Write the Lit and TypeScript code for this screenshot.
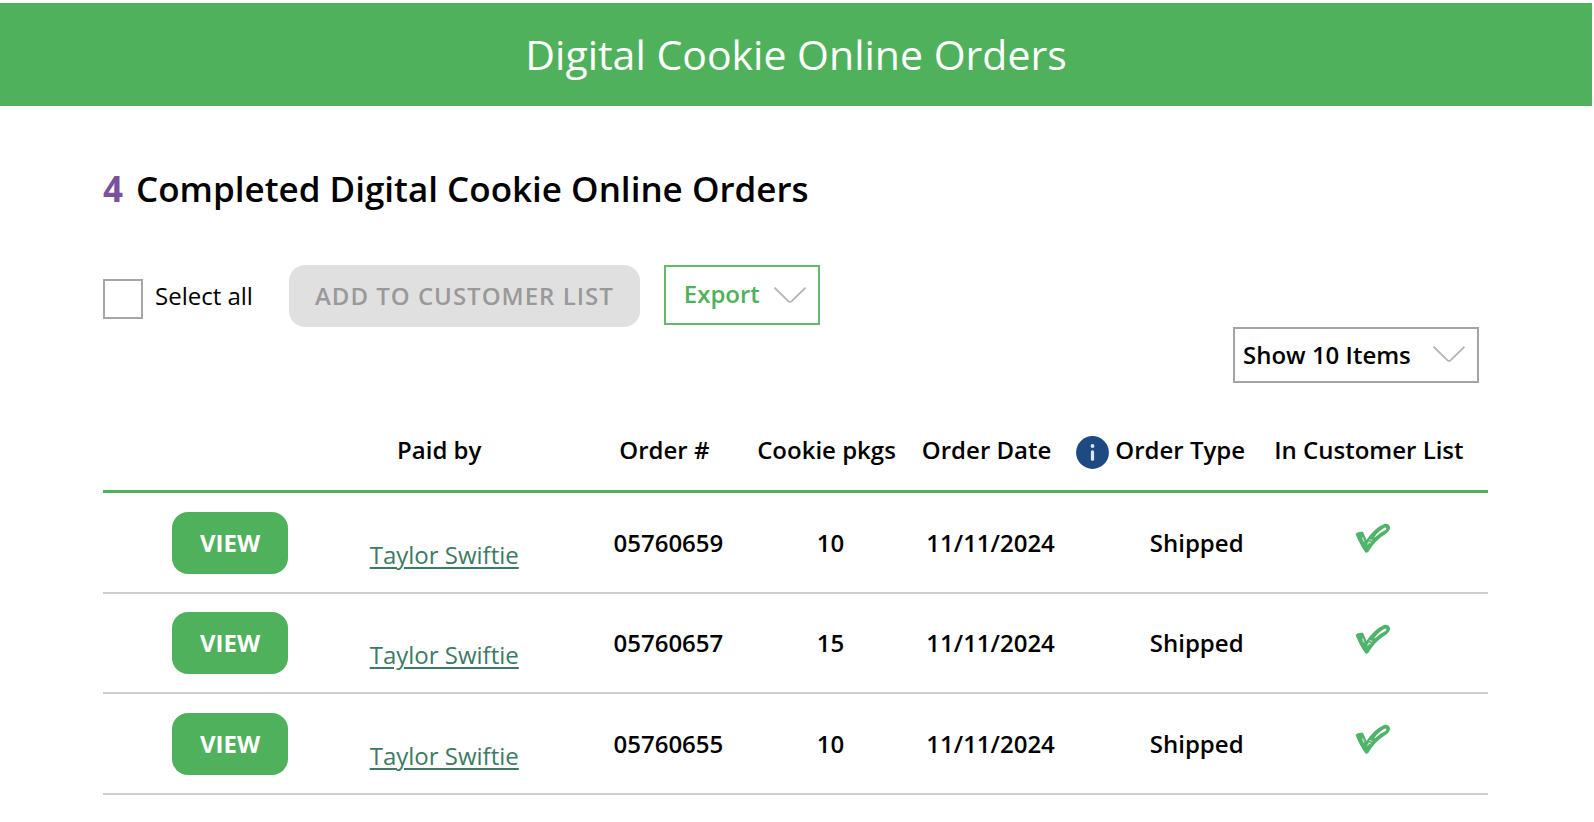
import { LitElement, html, css, svg } from "lit";
import { customElement, property, state } from "lit/decorators.js";

interface Order {
  customer: string;
  number: string;
  packages: number;
  date: string;
  type: string;
}

const ORDERS: Order[] = [
  { customer: "Taylor Swiftie", number: "05760659", packages: 10, date: "11/11/2024", type: "Shipped" },
  { customer: "Taylor Swiftie", number: "05760657", packages: 15, date: "11/11/2024", type: "Shipped" },
  { customer: "Taylor Swiftie", number: "05760655", packages: 10, date: "11/11/2024", type: "Shipped" },
];

const chevron = html`<svg class="chevron" width="32" height="16" viewBox="0 0 32 16" fill="none" aria-hidden="true">
  ${svg`<path d="M0.5 0.7 L14.5 14.4 Q16 15.6 17.5 14.4 L31.5 0.7" stroke="#b4b4b4" stroke-width="1.8"/>`}
</svg>`;

const infoIcon = html`<svg class="info" width="33" height="33" viewBox="0 0 33 33" role="img" aria-label="Order type information">
  <circle cx="16.500" cy="16.500" r="16.400" fill="#1e4a84" />
  <circle cx="16.500" cy="10" r="1.900" fill="#dfe6ef" />
  <rect x="14.900" y="14.200" width="3.200" height="10.600" rx="1.500" fill="#dfe6ef" />
</svg>`;

const checkIcon = html`<svg class="check" width="36" height="31" viewBox="0 0 36 31" role="img" aria-label="In customer list">
  <path d="M0.500 11 Q3 8 8 8.800 L11.500 17 Q19 5.500 29.500 0.800 Q34.500 0.200 35.200 5 Q34 9 29 12 Q20 18 14.500 27 Q13 30.500 10.500 29.500 Q5 22 0.500 11 Z" fill="#50b36a" />
  <path d="M19 14.500 Q24 7.500 30 4.600 Q32.500 4.800 30.500 7 Q25 9.500 21 13.500 Z" fill="#fff" />
  <path d="M12.500 21.500 L14 19 L16 20 M7.500 14.500 L9 18.500 M14.500 16.500 L17.500 17.500" fill="none" stroke="#c3e6cd" stroke-width="1.300" />
</svg>`;

@customElement("orders-table")
export class OrdersTable extends LitElement {
  @property({ attribute: false }) orders: Order[] = [];

  static styles = css`
    :host { display: block; }
    .orders {
      width: 100%;
      table-layout: fixed;
      border-collapse: separate;
      border-spacing: 0;
      font-size: 24px;
      font-weight: 600;
      line-height: 32px;
      color: #000;
    }
    .c-view { width: 254px; }
    .c-paid { width: 236px; }
    .c-number { width: 150px; }
    .c-pkgs { width: 174px; }
    .c-date { width: 146px; }
    .c-type { width: 194px; }
    .c-list { width: 230px; }
    th, td { box-sizing: border-box; padding: 0; text-align: center; vertical-align: middle; white-space: nowrap; }
    th { height: 83px; padding-right: 8px; font-weight: 600; border-bottom: 3px solid #50b15c; }
    td { height: 101px; border-bottom: 2px solid #cfcfcf; }
    tr:nth-child(even) td { height: 100px; }
    th.type { padding-right: 0; }
    .type-head { display: flex; align-items: center; justify-content: center; gap: 6px; }
    .info { flex: none; padding-top: 4px; }
    th.paid { padding-right: 72px; }
    td.paid { padding: 24px 62px 0 0; }
    td.type { padding-left: 72px; }
    .customer { font-weight: 400; color: #3c7a63; text-decoration: underline; text-decoration-thickness: 2px; text-underline-offset: 3px; }
    .view {
      font: inherit;
      font-weight: 700;
      line-height: 30px;
      padding: 16px 28px;
      border: 0;
      border-radius: 16px;
      background: #50b15c;
      color: #fff;
      display: inline-block;
      vertical-align: middle;
    }
    .check { display: block; margin: 0 auto; padding-bottom: 8px; }
  `;

  render() {
    return html`
      <table class="orders">
        <colgroup>
          <col class="c-view" /><col class="c-paid" /><col class="c-number" /><col class="c-pkgs" />
          <col class="c-date" /><col class="c-type" /><col class="c-list" />
        </colgroup>
        <thead>
          <tr>
            <th></th>
            <th class="paid" scope="col">Paid by</th>
            <th scope="col">Order #</th>
            <th scope="col">Cookie pkgs</th>
            <th scope="col">Order Date</th>
            <th class="type" scope="col"><span class="type-head">${infoIcon}<span>Order Type</span></span></th>
            <th scope="col">In Customer List</th>
          </tr>
        </thead>
        <tbody>
          ${this.orders.map(
            (o) => html`<tr>
              <td><button class="view" type="button">VIEW</button></td>
              <td class="paid"><a class="customer" href="#${o.number}">${o.customer}</a></td>
              <td>${o.number}</td>
              <td>${o.packages}</td>
              <td>${o.date}</td>
              <td class="type">${o.type}</td>
              <td>${checkIcon}</td>
            </tr>`
          )}
        </tbody>
      </table>
    `;
  }
}

@customElement("app-root")
export class AppRoot extends LitElement {
  @state() private selectAll = false;

  static styles = css`
    :host {
      display: block;
      background: #fff;
      color: #000;
      font-family: "Open Sans", "Noto Sans", sans-serif;
      font-size: 24px;
      line-height: 32px;
    }
    .banner { margin-right: 2px; padding: 24px; border-top: 3px solid #fff; background: #50b15c; color: #fff; text-align: center; }
    .banner-title { margin: 0; font-size: 41px; line-height: 55px; font-weight: 400; }
    .content { padding: 60px 106px 0 103px; }
    .summary { margin: 0; font-size: 35px; line-height: 46px; font-weight: 600; }
    .count { margin-right: 13px; color: #7a519c; font-weight: 700; }
    .toolbar { display: flex; align-items: flex-start; gap: 24px; margin-top: 53px; }
    .select-all { display: flex; align-items: center; gap: 12px; height: 62px; margin-right: 12px; }
    .box {
      appearance: none;
      width: 40px;
      height: 40px;
      margin: 6px 0 0;
      border: 2px solid #a6a6a6;
      background: #fff;
    }
    .box:checked { background: #50b15c; }
    .add {
      font: inherit;
      font-weight: 600;
      padding: 15px 26px;
      border: 0;
      border-radius: 16px;
      background: #e0e0e0;
      color: #999;
      letter-spacing: 1px;
    }
    .export {
      font: inherit;
      font-weight: 600;
      line-height: 30px;
      display: flex;
      align-items: center;
      gap: 14px;
      padding: 12px 12px 14px 18px;
      border: 2px solid #62bb6c;
      background: #fff;
      color: #50b15c;
    }
    .export .chevron { padding-top: 2px; }
    .paging { display: flex; justify-content: flex-end; margin-right: 9px; }
    .picker { position: relative; display: block; }
    .size {
      appearance: none;
      font: inherit;
      font-weight: 600;
      color: #000;
      width: 246px;
      height: 56px;
      padding: 0 60px 0 8px;
      border: 2px solid #a3a3a3;
      border-radius: 0;
      background: #fff;
    }
    .picker .chevron { position: absolute; right: 14px; top: 19px; pointer-events: none; }
    .list { display: block; margin-top: 27px; }
  `;

  private toggleAll(e: Event) {
    this.selectAll = (e.target as HTMLInputElement).checked;
  }

  render() {
    return html`
      <header class="banner"><h1 class="banner-title">Digital Cookie Online Orders</h1></header>
      <main class="content">
        <h2 class="summary"><span class="count">4</span>Completed Digital Cookie Online Orders</h2>
        <div class="toolbar">
          <label class="select-all">
            <input class="box" type="checkbox" .checked=${this.selectAll} @change=${this.toggleAll} />
            <span>Select all</span>
          </label>
          <button class="add" type="button" ?disabled=${!this.selectAll}>ADD TO CUSTOMER LIST</button>
          <button class="export" type="button"><span>Export</span>${chevron}</button>
        </div>
        <div class="paging">
          <label class="picker">
            <select class="size" aria-label="Items per page">
              <option>Show 10 Items</option>
              <option>Show 25 Items</option>
              <option>Show 50 Items</option>
            </select>
            ${chevron}
          </label>
        </div>
        <orders-table class="list" .orders=${ORDERS}></orders-table>
      </main>
    `;
  }
}
